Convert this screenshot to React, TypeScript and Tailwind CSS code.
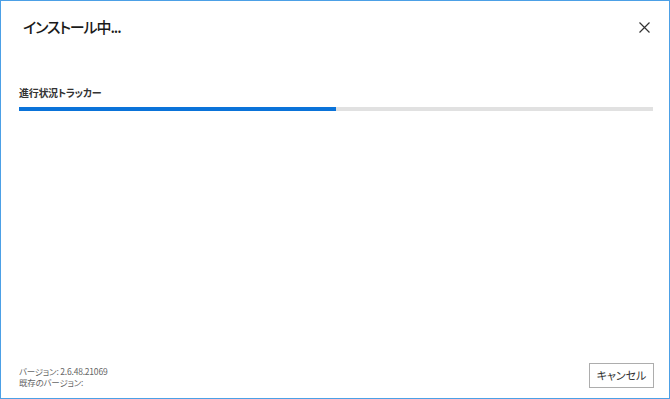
import React from "react";

function App() {
  const progress = 50;

  return (
    <div
      className="w-[670px] h-[399px] bg-white border border-[#4ca0e6] flex flex-col text-[#1a1a1a] [font-feature-settings:'palt']"
      style={{ fontFamily: '"Noto Sans CJK JP", "Noto Sans", sans-serif' }}
    >
      {/* ヘッダー */}
      <div className="flex items-center justify-between pl-[22px] pr-[15px] pt-[14px]">
        <h1 className="text-[15px] leading-[24px] font-medium tracking-[-1.1px]">インストール中...</h1>
        <button className="w-[20px] h-[24px] flex items-center justify-center">
          <svg width="11" height="11" viewBox="0 0 11 11">
            <path d="M0.5 0.5 L10.5 10.5 M10.5 0.5 L0.5 10.5" stroke="#333" strokeWidth="1.2" />
          </svg>
        </button>
      </div>

      {/* 進行状況 */}
      <div className="px-[18px] pt-[46px]">
        <div className="text-[10px] leading-[16px] font-bold text-[#333] tracking-[-0.3px]">進行状況トラッカー</div>
        <div className="mt-[6px] h-[4px] w-[634px] bg-[#e1e1e1]">
          <div className="h-full bg-[#0a73d9]" style={{ width: `${progress}%` }} />
        </div>
      </div>

      {/* フッター */}
      <div className="mt-auto flex items-end justify-between pl-[18px] pr-[15px] pb-[9px]">
        <div className="text-[8.5px] leading-[11px] text-[#666] mb-[1px] tracking-[-0.2px]">
          <div>バージョン: 2.6.48.21069</div>
          <div>既存のバージョン:</div>
        </div>
        <button className="w-[65px] h-[25px] border border-[#adadad] bg-white text-[11px] leading-none text-[#333] mb-[1px]">
          キャンセル
        </button>
      </div>
    </div>
  );
}

export default App;
